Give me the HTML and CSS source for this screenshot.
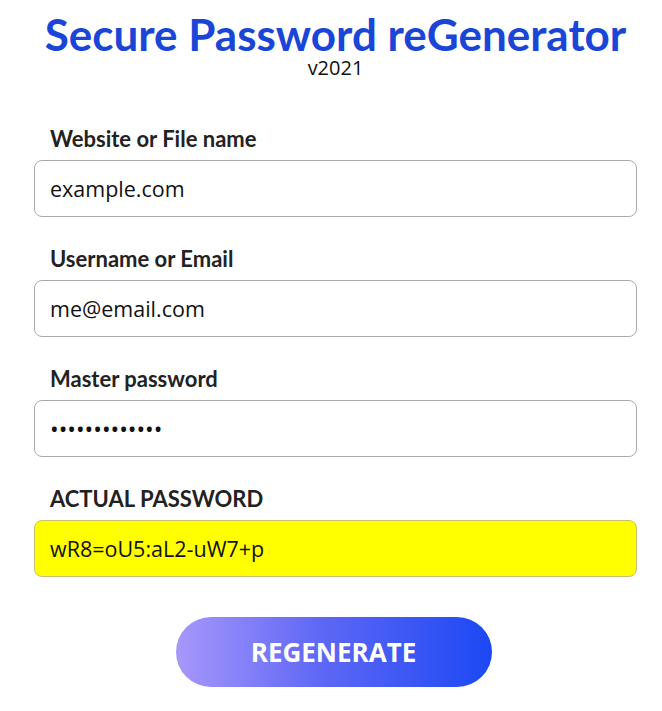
FILE: index.html
```html
<!DOCTYPE html>
<html lang="en">
<head>
<meta charset="utf-8">
<title>Secure Password reGenerator</title>
<link rel="stylesheet" href="styles.css">
</head>
<body>
<div class="page">
  <header class="header">
    <h1 class="title">Secure Password reGenerator</h1>
    <div class="version">v2021</div>
  </header>
  <form class="form">
    <div class="field">
      <label class="label">Website or File name</label>
      <div class="input">example.com</div>
    </div>
    <div class="field">
      <label class="label">Username or Email</label>
      <div class="input">me@email.com</div>
    </div>
    <div class="field">
      <label class="label">Master password</label>
      <div class="input dots">•••••••••••••</div>
    </div>
    <div class="field">
      <label class="label">ACTUAL PASSWORD</label>
      <div class="input result">wR8=oU5:aL2-uW7+p</div>
    </div>
    <div class="actions">
      <button type="button" class="btn">REGENERATE</button>
    </div>
  </form>
</div>
</body>
</html>
```
FILE: styles.css
```css
html, body { margin: 0; padding: 0; background: #fff; }
body { font-family: "Open Sans", "DejaVu Sans", sans-serif; color: #111; }
.page { width: 603px; margin-left: 34px; }
.header { text-align: center; padding-top: 12px; }
.title {
  margin: 0;
  font-family: Lato, sans-serif;
  font-weight: 700;
  font-size: 44px;
  line-height: 44px;
  color: #1a46d8;
}
.version { font-size: 20px; line-height: 24px; color: #111; }
.form { margin-top: 45px; display: flex; flex-direction: column; gap: 28px; }
.field { display: flex; flex-direction: column; gap: 8px; }
.label {
  font-family: Lato, sans-serif;
  font-weight: 700;
  font-size: 22px;
  line-height: 27px;
  color: #222;
  padding-left: 16px;
}
.input {
  box-sizing: border-box;
  height: 57px;
  border: 1px solid #aaa;
  border-radius: 8px;
  padding: 0 15px;
  display: flex;
  align-items: center;
  font-size: 21.5px;
  color: #111;
}
.dots { font-size: 23px; letter-spacing: 0; }
.result { background: #ffff00; border-color: #c8c070; }
.actions { display: flex; justify-content: center; margin-top: 12px; padding-right: 4px; }
.btn {
  width: 316px;
  height: 70px;
  border: none;
  border-radius: 35px;
  background: linear-gradient(90deg, #a797fb 0%, #5f68f6 45%, #1c48f4 100%);
  color: #fff;
  font-family: "Open Sans", sans-serif;
  font-weight: 700;
  font-size: 26px;
}
```
